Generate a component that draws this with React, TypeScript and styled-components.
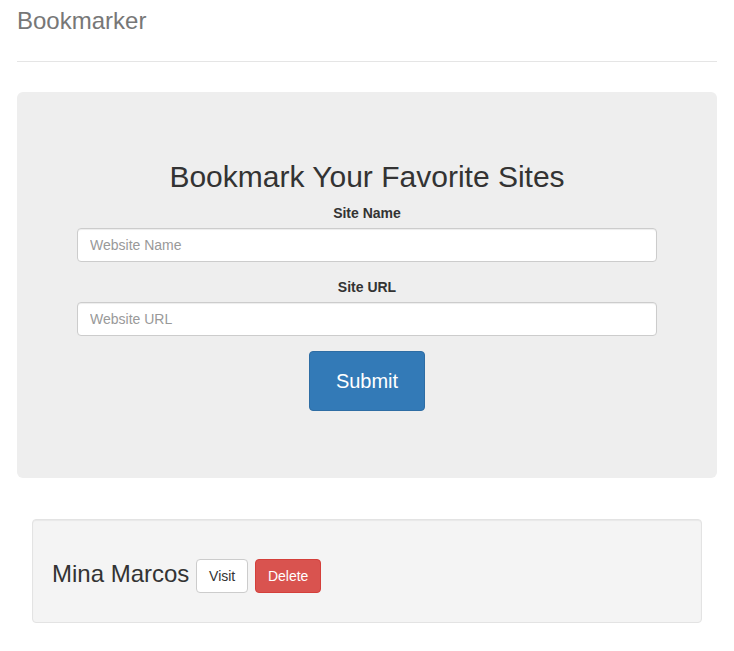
import React from "react";
import styled, { createGlobalStyle } from "styled-components";

const GlobalStyle = createGlobalStyle`
  * { box-sizing: border-box; }
  html, body { margin: 0; padding: 0; background: #fff; }
  body {
    font-family: "Liberation Sans", Arial, Helvetica, sans-serif;
    font-size: 14px;
    line-height: 1.42857143;
    color: #333;
  }
`;

const Container = styled.div`
  padding: 1px 17px 0;
`;

const Header = styled.div`
  padding-bottom: 20px;
  border-bottom: 1px solid #e5e5e5;
  margin-bottom: 30px;
`;

const Brand = styled.h3`
  margin: 0;
  font-size: 24px;
  font-weight: 500;
  line-height: 40px;
  color: #777;
`;

const Jumbotron = styled.div`
  background: #eee;
  border-radius: 6px;
  padding: 48px 60px;
  text-align: center;
`;

const Title = styled.h2`
  margin: 20px 0 10px;
  font-size: 30px;
  font-weight: 500;
  line-height: 1.1;
  color: #333;
`;

const Form = styled.form`
  margin-bottom: 19px;
`;

const FormGroup = styled.div`
  margin-bottom: 15px;
`;

const Label = styled.label`
  display: inline-block;
  margin-bottom: 5px;
  font-weight: 700;
  max-width: 100%;
`;

const Input = styled.input`
  display: block;
  width: 100%;
  height: 34px;
  padding: 6px 12px;
  font-family: inherit;
  font-size: 14px;
  line-height: 1.42857143;
  color: #555;
  background: #fff;
  border: 1px solid #ccc;
  border-radius: 4px;
  box-shadow: inset 0 1px 1px rgba(0, 0, 0, 0.075);
  &::placeholder { color: #999; }
`;

const Button = styled.button<{ $variant: "primary" | "default" | "danger"; $size?: "lg" }>`
  display: inline-block;
  vertical-align: middle;
  font-family: inherit;
  font-weight: 400;
  cursor: pointer;
  border: 1px solid transparent;
  padding: ${(p) => (p.$size === "lg" ? "16px 26px" : "6px 12px")};
  font-size: ${(p) => (p.$size === "lg" ? "20px" : "14px")};
  line-height: ${(p) => (p.$size === "lg" ? "26px" : "1.42857143")};
  border-radius: 4px;
  color: ${(p) => (p.$variant === "default" ? "#333" : "#fff")};
  background: ${(p) =>
    p.$variant === "primary" ? "#337ab7" : p.$variant === "danger" ? "#d9534f" : "#fff"};
  border-color: ${(p) =>
    p.$variant === "primary" ? "#2e6da4" : p.$variant === "danger" ? "#d43f3a" : "#ccc"};
`;

const Results = styled.div`
  margin-top: 41px;
  padding: 0 15px;
`;

const Well = styled.div`
  min-height: 20px;
  padding: 19px;
  margin-bottom: 20px;
  background: #f4f4f4;
  border: 1px solid #e3e3e3;
  border-radius: 4px;
  box-shadow: inset 0 1px 1px rgba(0, 0, 0, 0.05);
`;

const BookmarkName = styled.h3`
  margin: 20px 0 10px;
  font-size: 24px;
  font-weight: 500;
  line-height: 1.1;
  color: #333;
`;

export default function App() {
  return (
    <>
      <GlobalStyle />
      <Container>
        <Header>
          <Brand>Bookmarker</Brand>
        </Header>
        <Jumbotron>
          <Title>Bookmark Your Favorite Sites</Title>
          <Form onSubmit={(e) => e.preventDefault()}>
            <FormGroup>
              <Label>Site Name</Label>
              <Input type="text" placeholder="Website Name" />
            </FormGroup>
            <FormGroup>
              <Label>Site URL</Label>
              <Input type="text" placeholder="Website URL" />
            </FormGroup>
            <Button type="submit" $variant="primary" $size="lg">Submit</Button>
          </Form>
        </Jumbotron>
        <Results>
          <Well>
            <BookmarkName>
              Mina Marcos{" "}
              <Button $variant="default">Visit</Button>{" "}
              <Button $variant="danger">Delete</Button>
            </BookmarkName>
          </Well>
        </Results>
      </Container>
    </>
  );
}
